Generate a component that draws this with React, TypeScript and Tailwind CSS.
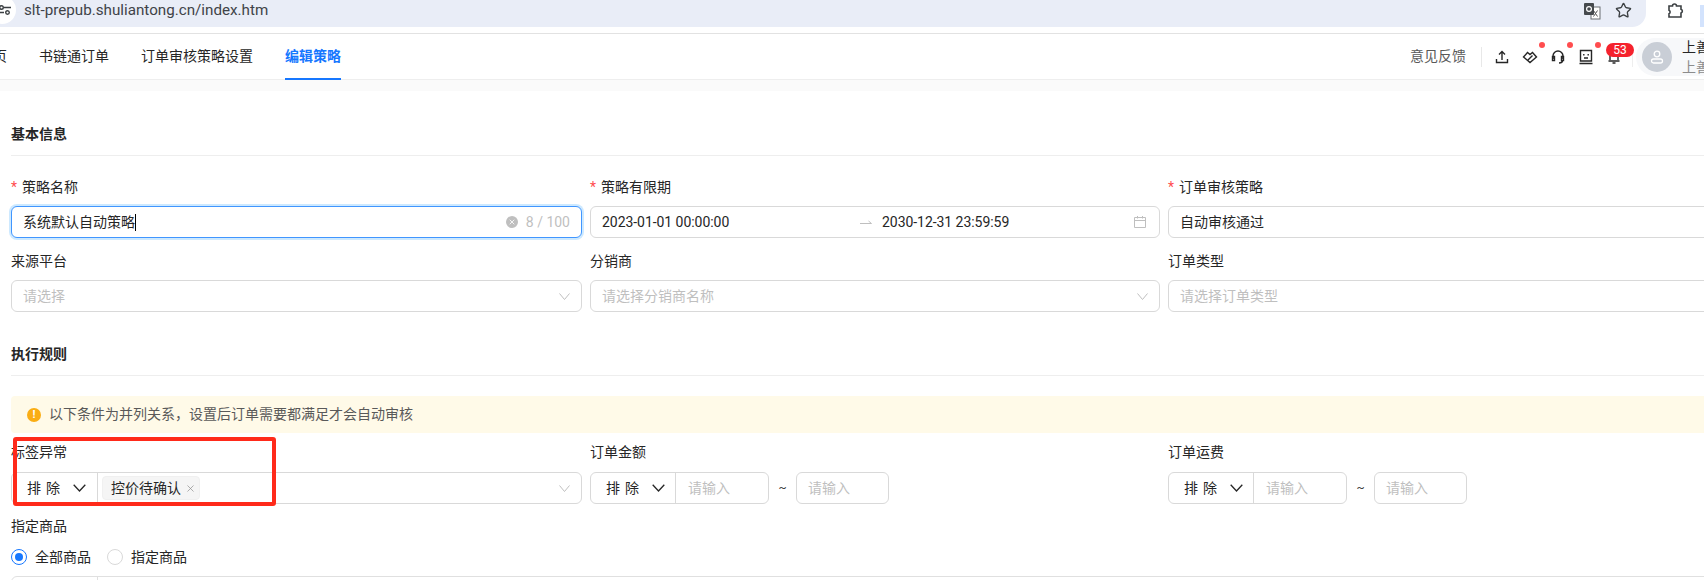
import { ReactNode } from "react"
import { Star, X } from "lucide-react"

const fontStack = "font-['Roboto','Noto_Sans_CJK_SC',sans-serif]"

function Dot() {
  return <span className="absolute right-[-7px] top-[-7px] h-[6px] w-[6px] rounded-full bg-[#ff4d4f]" />
}

function HeaderIcon({ children, dot }: { children: ReactNode; dot?: boolean }) {
  return (
    <div className="relative flex h-[16px] w-[16px] items-center justify-center text-[#262626]">
      <svg viewBox="0 0 16 16" className="h-[16px] w-[16px]" fill="none" stroke="currentColor" strokeWidth="1.4">
        {children}
      </svg>
      {dot && <Dot />}
    </div>
  )
}

function BrowserBar() {
  return (
    <div className="flex h-[34px] border-b border-[#e2e2e2] bg-white">
      <div className="flex h-[27px] w-[1648px] items-center rounded-br-[14px] bg-[#e9edf7]">
        <div className="ml-[-12px] mt-[-4px] flex h-[28px] w-[28px] shrink-0 items-center justify-end self-start rounded-full bg-white pr-[5px]">
          <svg viewBox="0 0 12 12" className="h-[12px] w-[12px] text-[#3c4043]" fill="none" stroke="currentColor" strokeWidth="1.4">
            <path d="M5 3.500h7M0 8.500h5" />
            <circle cx="2.500" cy="3.500" r="1.800" />
            <circle cx="8.500" cy="8.500" r="1.800" />
          </svg>
        </div>
        <span className="ml-[8px] mt-[-6px] text-[15.2px] leading-none text-[#3f4348]">slt-prepub.shuliantong.cn/index.htm</span>
        <div className="ml-auto mt-[-6px] flex items-center gap-[14px] pr-[14px]">
          <svg viewBox="0 0 18 18" className="h-[18px] w-[18px]">
            <rect x="8" y="5" width="9" height="12" fill="#fff" stroke="#6b6f73" />
            <path d="M10.500 8.500l4 6M14.500 8.500l-4 6" stroke="#555" />
            <rect x="1" y="1" width="10" height="12" rx="1" fill="#45494d" />
            <circle cx="6" cy="7" r="2.400" fill="none" stroke="#fff" strokeWidth="1.200" />
          </svg>
          <Star size={17} strokeWidth={1.9} className="text-[#3c4043]" />
        </div>
      </div>
      <svg viewBox="0 0 18 18" className="ml-[21px] mt-[1px] h-[18px] w-[18px] text-[#3c4043]" fill="none" stroke="currentColor" strokeWidth="1.600">
        <path d="M2 5h3.500a2 2 0 0 1 4 0H14v3.200a2 2 0 0 1 0 3.800V16H2v-3.200a2 2 0 0 0 0-3.600z" />
      </svg>
      <div className="ml-[15px] mt-[5px] h-[22px] w-[4px] bg-[#d3e3fd]" />
    </div>
  )
}

function TopNav() {
  return (
    <div className="flex h-[46px] items-stretch justify-between border-b border-[#eeeeee] bg-white text-[14px] text-[#262626]">
      <div className="ml-[-21px] flex gap-[32px]">
        <div className="flex items-center">首页</div>
        <div className="flex items-center">书链通订单</div>
        <div className="flex items-center">订单审核策略设置</div>
        <div className="mb-[-1px] flex items-center border-b-[2px] border-[#1677ff] font-semibold text-[#1677ff]">编辑策略</div>
      </div>
      <div className="flex w-[294px] shrink-0 items-center overflow-hidden">
        <span className="w-[56px] shrink-0 whitespace-nowrap text-[#595959]">意见反馈</span>
        <div className="ml-[15px] h-[20px] w-px shrink-0 bg-[#e8e8e8]" />
        <div className="ml-[12px] flex shrink-0 items-center gap-[12px]">
          <HeaderIcon>
            <path d="M8 11V2.500M5 5.500l3-3 3 3M2.500 10v3.500h11V10" />
          </HeaderIcon>
          <HeaderIcon dot>
            <path d="M1.500 8 5.500 3.500 8 5.500l2.500-2 4 4.500L8 13.500zM6 11l4.500-4.500" />
          </HeaderIcon>
          <HeaderIcon dot>
            <path d="M3 10V7a5 5 0 0 1 10 0v3M2.500 7.500h2v4h-2zM11.500 7.500h2v4h-2zM12.500 11.500c0 1.500-1.500 2.500-3.500 2.500" />
          </HeaderIcon>
          <HeaderIcon dot>
            <path d="M2.500 1.500h11v10.500h-11zM1.500 14.500h13" />
            <path d="M5.800 5v1.400M10.200 5v1.400M6 9h4" />
          </HeaderIcon>
          <div className="relative h-[16px] w-[16px]">
            <HeaderIcon>
              <path d="M4 11V7a4 4 0 0 1 8 0v4M2.500 12h11M6.500 14h3" />
            </HeaderIcon>
            <span className="absolute left-0 top-[-6px] flex h-[14px] w-[28px] items-center justify-center rounded-full bg-[#f5222d] text-[12px] leading-none text-white">
              53
            </span>
          </div>
        </div>
        <div className="ml-[10px] h-[20px] w-px shrink-0 bg-[#eeeeee]" />
        <div className="ml-[3px] flex h-[38px] w-[80px] shrink-0 items-center rounded-l-full bg-[#f7f8fa] pl-[6px]">
          <div className="flex h-[30px] w-[30px] shrink-0 items-center justify-center rounded-full bg-[#c9ced6]">
            <svg viewBox="0 0 16 16" className="h-[16px] w-[16px]" fill="none" stroke="#fff" strokeWidth="1.300">
              <circle cx="8" cy="5" r="2.800" />
              <rect x="2.500" y="10" width="11" height="4" rx="2" />
            </svg>
          </div>
          <div className="ml-[10px] flex flex-col text-[14px] leading-[20px]">
            <span className="whitespace-nowrap text-[#262626]">上善若水</span>
            <span className="whitespace-nowrap text-[#8c8c8c]">上善若水</span>
          </div>
        </div>
      </div>
    </div>
  )
}

function SectionTitle({ children, className }: { children: ReactNode; className: string }) {
  return (
    <div className={`flex items-end border-b border-[#eeeeee] pb-[10px] text-[14px] font-semibold leading-[22px] text-[#262626] ${className}`}>
      {children}
    </div>
  )
}

function Field({ label, required, raised, children }: { label: string; required?: boolean; raised?: boolean; children: ReactNode }) {
  return (
    <div className={`min-w-0 ${raised ? "mt-[-1px]" : ""}`}>
      <div className={`flex h-[22px] items-center text-[14px] text-[#262626] ${raised ? "mb-[9px]" : "mb-[8px]"}`}>
        {required && <span className="mr-[5px] w-[6px] text-[14px] text-[#ff4d4f]">*</span>}
        {label}
      </div>
      {children}
    </div>
  )
}

function Box({ children }: { children: ReactNode }) {
  return (
    <div className="flex h-[32px] items-center rounded-[6px] border border-[#d9d9d9] bg-white pl-[11px] pr-[11px] text-[14px] text-[#262626]">
      {children}
    </div>
  )
}

function Placeholder({ children }: { children: ReactNode }) {
  return <span className="text-[#bfbfbf]">{children}</span>
}

function SelectArrow() {
  return (
    <svg viewBox="0 0 11 7" className="ml-auto h-[7px] w-[11px] text-[#bfbfbf]" fill="none" stroke="currentColor" strokeWidth="1">
      <path d="M0.500 0.500 5.500 6.500 10.500 0.500" />
    </svg>
  )
}

function ModeSelect({ wide }: { wide?: boolean }) {
  return (
    <div className={`flex h-full shrink-0 items-center border-r border-[#d9d9d9] pl-[15px] text-[14px] text-[#262626] ${wide ? "w-[86px]" : "w-[85px]"}`}>
      <span className="tracking-[5px]">排除</span>
      <svg viewBox="0 0 13 8" className="ml-[8px] h-[8px] w-[13px]" fill="none" stroke="currentColor" strokeWidth="1.300">
        <path d="M0.700 0.700 6.500 7 12.300 0.700" />
      </svg>
    </div>
  )
}

function RangeField() {
  return (
    <div className="flex items-center text-[14px]">
      <div className="flex h-[32px] w-[179px] items-center rounded-[6px] border border-[#d9d9d9] bg-white">
        <ModeSelect />
        <span className="ml-[12px]"><Placeholder>请输入</Placeholder></span>
      </div>
      <span className="w-[27px] text-center text-[12px] text-[#434343]">~</span>
      <div className="flex h-[32px] w-[93px] items-center rounded-[6px] border border-[#d9d9d9] bg-white pl-[11px]">
        <Placeholder>请输入</Placeholder>
      </div>
    </div>
  )
}

function Radio({ checked, label }: { checked?: boolean; label: string }) {
  return (
    <div className="flex items-center gap-[8px] text-[14px] text-[#262626]">
      <span className={`flex h-[16px] w-[16px] items-center justify-center rounded-full border bg-white ${checked ? "border-[#1677ff]" : "border-[#d9d9d9]"}`}>
        {checked && <span className="h-[8px] w-[8px] rounded-full bg-[#1677ff]" />}
      </span>
      {label}
    </div>
  )
}

export default function App() {
  return (
    <div className={`h-[580px] w-[1704px] overflow-hidden bg-white ${fontStack}`}>
      <BrowserBar />
      <TopNav />
      <div className="h-[11px] bg-[#fafafa]" />

      <div className="w-[1770px] px-[11px]">
        <SectionTitle className="h-[65px]">基本信息</SectionTitle>

        <div className="mt-[20px] grid grid-cols-[571px_570px_571px] gap-x-[8px] gap-y-[12px]">
          <Field label="策略名称" required>
            <div className="flex h-[32px] items-center rounded-[6px] border border-[#4096ff] bg-white pl-[11px] pr-[11px] text-[14px] text-[#262626] shadow-[0_0_0_2px_rgba(5,145,255,0.2)]">
              <span>系统默认自动策略</span>
              <span className="h-[17px] w-px bg-black" />
              <span className="ml-auto flex h-[12px] w-[12px] items-center justify-center rounded-full bg-[#bfbfbf]">
                <X size={8} strokeWidth={2.500} className="text-white" />
              </span>
              <span className="ml-[8px] text-[#bfbfbf]">8 / 100</span>
            </div>
          </Field>
          <Field label="策略有限期" required>
            <Box>
              <span className="w-[258px] tracking-[-0.05px]">2023-01-01 00:00:00</span>
              <svg viewBox="0 0 12 8" className="h-[8px] w-[12px] text-[#bfbfbf]" fill="none" stroke="currentColor" strokeWidth="1">
                <path d="M0 5.500h11.500l-3-2.500" />
              </svg>
              <span className="ml-[10px] tracking-[-0.05px]">2030-12-31 23:59:59</span>
              <svg viewBox="0 0 14 14" className="ml-auto mr-[1px] h-[14px] w-[14px] text-[#bfbfbf]" fill="none" stroke="currentColor" strokeWidth="1">
                <path d="M1.500 2.500h11v10h-11zM1.500 5.500h11M4.500 1v2.500M9.500 1v2.500" />
              </svg>
            </Box>
          </Field>
          <Field label="订单审核策略" required>
            <Box>自动审核通过</Box>
          </Field>
          <Field label="来源平台">
            <Box>
              <Placeholder>请选择</Placeholder>
              <SelectArrow />
            </Box>
          </Field>
          <Field label="分销商">
            <Box>
              <Placeholder>请选择分销商名称</Placeholder>
              <SelectArrow />
            </Box>
          </Field>
          <Field label="订单类型">
            <Box>
              <Placeholder>请选择订单类型</Placeholder>
              <SelectArrow />
            </Box>
          </Field>
        </div>

        <SectionTitle className="h-[64px]">执行规则</SectionTitle>

        <div className="mt-[20px] flex h-[37px] items-center rounded-[4px] bg-[#fffae8] pl-[16px] text-[14px] text-[#595959]">
          <span className="flex h-[14px] w-[14px] items-center justify-center rounded-full bg-[#faad14] text-[11px] font-bold leading-none text-white">!</span>
          <span className="ml-[8px]">以下条件为并列关系，设置后订单需要都满足才会自动审核</span>
        </div>

        <div className="mt-[9px] grid grid-cols-[571px_570px_571px] gap-x-[8px]">
          <div className="relative">
            <Field label="标签异常" raised>
              <div className="flex h-[32px] items-center rounded-[6px] border border-[#d9d9d9] bg-white pr-[11px]">
                <ModeSelect wide />
                <div className="ml-[4px] flex h-[24px] w-[98px] items-center rounded-[4px] border border-[#f0f0f0] bg-[#f5f5f5] pl-[8px] text-[14px] text-[#262626]">
                  控价待确认
                  <X size={11} strokeWidth={1.500} className="ml-[4px] text-[#8c8c8c]" />
                </div>
                <SelectArrow />
              </div>
            </Field>
            <div className="absolute left-[2px] top-[-5px] h-[69px] w-[263px] rounded-[3px] border-[4px] border-[#ff2a1a]" />
          </div>
          <Field label="订单金额" raised>
            <RangeField />
          </Field>
          <Field label="订单运费" raised>
            <RangeField />
          </Field>
        </div>

        <div className="mt-[12px]">
          <Field label="指定商品" raised>
            <div className="flex h-[22px] items-center gap-[16px]">
              <Radio checked label="全部商品" />
              <Radio label="指定商品" />
            </div>
          </Field>
          <div className="mt-[8px] flex h-[40px] rounded-t-[6px] border border-[#e0e0e0]">
            <div className="w-[86px] border-r border-[#e0e0e0]" />
          </div>
        </div>
      </div>
    </div>
  )
}
